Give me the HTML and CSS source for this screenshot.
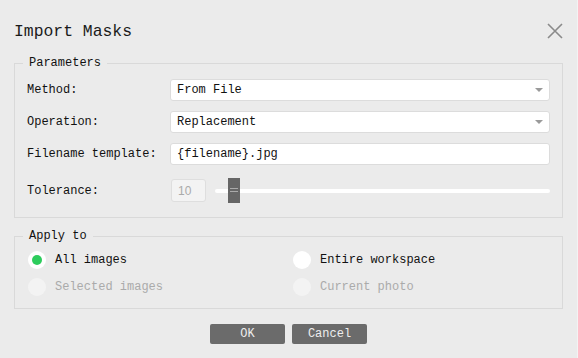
FILE: index.html
```html
<!DOCTYPE html>
<html>
<head>
<meta charset="utf-8">
<link rel="stylesheet" href="styles.css">
</head>
<body>
<div class="dialog">
  <div class="header">
    <div class="title">Import Masks</div>
    <svg class="close" width="16" height="16" viewBox="0 0 16 16"><path d="M1 1L15 15M15 1L1 15" stroke="#8a8a8a" stroke-width="1.6" fill="none"/></svg>
  </div>
  <fieldset class="group params">
    <legend>Parameters</legend>
    <div class="row">
      <div class="label">Method:</div>
      <div class="select"><span>From File</span><span class="arrow"></span></div>
    </div>
    <div class="row">
      <div class="label">Operation:</div>
      <div class="select"><span>Replacement</span><span class="arrow"></span></div>
    </div>
    <div class="row">
      <div class="label">Filename template:</div>
      <div class="select"><span>{filename}.jpg</span></div>
    </div>
    <div class="row tol">
      <div class="label">Tolerance:</div>
      <div class="slider-wrap">
        <div class="num">10</div>
        <div class="track"><div class="thumb"><i></i><i></i></div></div>
      </div>
    </div>
  </fieldset>
  <fieldset class="group apply">
    <legend>Apply to</legend>
    <div class="radios">
      <div class="radio"><span class="dot on"></span><span>All images</span></div>
      <div class="radio"><span class="dot"></span><span>Entire workspace</span></div>
      <div class="radio disabled"><span class="dot"></span><span>Selected images</span></div>
      <div class="radio disabled"><span class="dot"></span><span>Current photo</span></div>
    </div>
  </fieldset>
  <div class="buttons">
    <div class="btn">OK</div>
    <div class="btn">Cancel</div>
  </div>
</div>
</body>
</html>
```
FILE: styles.css
```css
html, body {
  margin: 0;
  padding: 0;
  background: #ebebeb;
}
.dialog {
  width: 578px;
  height: 358px;
  box-sizing: border-box;
  padding: 0 14px;
  font-family: "Liberation Mono", monospace;
  font-size: 12px;
  color: #111;
  border-right: 1px solid #f3f3f3;
}
.header {
  height: 56px;
  box-sizing: border-box;
  padding-top: 6px;
  display: flex;
  align-items: center;
  justify-content: space-between;
}
.title {
  font-size: 16.4px;
  color: #1a1a1a;
}
.group {
  margin: 0;
  border: 1px solid #d9d9d9;
  min-width: 0;
}
.group legend {
  padding: 0 6px;
  line-height: 14px;
  color: #111;
}
.params {
  padding: 9px 12px 14px 12px;
}
.params legend {
  margin-left: -4px;
}
.row {
  display: flex;
  align-items: center;
  height: 22px;
  margin-bottom: 10px;
}
.row.tol {
  height: 25px;
  margin-bottom: 0;
  padding-top: 3px;
}
.label {
  width: 143px;
  flex: none;
}
.select {
  flex: 1;
  height: 22px;
  box-sizing: border-box;
  background: #fff;
  border: 1px solid #dcdcdc;
  border-radius: 3px;
  display: flex;
  align-items: center;
  justify-content: space-between;
  padding: 0 5px 0 6px;
}
.arrow {
  width: 0;
  height: 0;
  border-left: 4px solid transparent;
  border-right: 4px solid transparent;
  border-top: 4px solid #9a9a9a;
  margin-right: 1px;
}
.slider-wrap {
  flex: 1;
  display: flex;
  align-items: center;
  gap: 9px;
}
.num {
  width: 35px;
  height: 23px;
  box-sizing: border-box;
  margin-left: 1px;
  background: #f3f3f3;
  border: 1px solid #dedede;
  border-radius: 3px;
  font-family: "Liberation Sans", Arial, sans-serif;
  font-size: 12px;
  color: #aaa;
  display: flex;
  align-items: center;
  padding-left: 6px;
}
.track {
  flex: 1;
  height: 4px;
  background: #fff;
  border-radius: 2px;
  position: relative;
}
.thumb {
  position: absolute;
  left: 13px;
  top: -11px;
  width: 12px;
  height: 25px;
  background: #666;
  display: flex;
  flex-direction: column;
  align-items: center;
  justify-content: center;
  gap: 2px;
}
.thumb i {
  display: block;
  width: 8px;
  height: 1px;
  background: #aaa;
}
.apply {
  margin-top: 11px;
  padding: 8px 13px 12px 13px;
}
.apply legend {
  margin-left: -5px;
}
.radios {
  display: grid;
  grid-template-columns: 265px 1fr;
  row-gap: 9px;
}
.radio {
  display: flex;
  align-items: center;
  gap: 9px;
  height: 18px;
}
.dot {
  width: 18px;
  height: 18px;
  border-radius: 50%;
  background: #fff;
  display: flex;
  align-items: center;
  justify-content: center;
  flex: none;
}
.dot.on::after {
  content: "";
  width: 10px;
  height: 10px;
  border-radius: 50%;
  background: #2dcc5c;
}
.radio.disabled {
  color: #aaa;
}
.radio.disabled .dot {
  background: #f3f3f3;
}
.buttons {
  display: flex;
  justify-content: center;
  gap: 7px;
  margin-top: 15px;
}
.btn {
  width: 75px;
  height: 20px;
  background: #6b6b6b;
  color: #eee;
  border-radius: 2px;
  display: flex;
  align-items: center;
  justify-content: center;
}
```
